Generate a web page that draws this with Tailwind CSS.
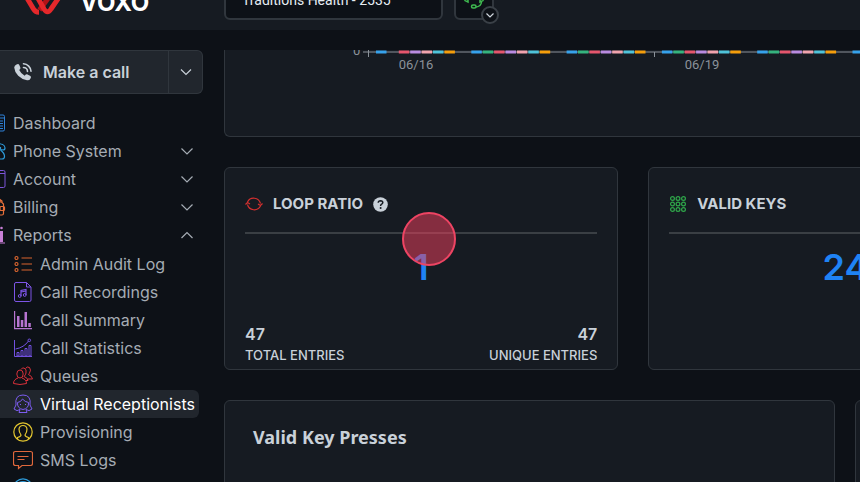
<!DOCTYPE html>
<html lang="en">

<head>
    <meta charset="UTF-8">
    <meta name="viewport" content="width=device-width, initial-scale=1.0">
    <script src="https://cdn.jsdelivr.net/npm/@tailwindcss/browser@4"></script>
    <title>VOXO | Virtual Receptionists</title>
</head>

<body class="h-screen overflow-hidden bg-[#0d1117] font-['Inter',sans-serif] text-[#c9d1d9]">
    <!-- Top bar -->
    <header class="flex h-[30px] items-end overflow-hidden bg-[#161b22]">
        <a href="#" class="flex w-[224px] shrink-0 items-end gap-4 pb-[15px] pl-6 text-white">
            <svg class="h-[30px] w-10" viewBox="0 0 40 30" fill="none" stroke-width="5">
                <path d="M15.500 25 L28 8" stroke="#b31217" />
                <path d="M0 8 L9.500 24 Q11.500 27.300 15 27.300" stroke="#e5282b" />
                <path d="M11 8 L20 24 Q23.500 29.500 27 24 L38 8" stroke="#e5282b" />
            </svg>
            <span class="text-2xl leading-6 font-bold">VOXO</span>
        </a>
        <select aria-label="Company"
            class="mb-[10px] h-10 w-[219px] shrink-0 appearance-none rounded-md border-2 border-[#30363d] bg-[#0d1117] px-4 font-['Roboto',sans-serif] text-sm text-[#e6edf3]">
            <option>Traditions Health - 2535</option>
        </select>
        <button aria-label="Agent status"
            class="relative mb-[10px] ml-[11px] flex h-10 w-10 shrink-0 items-center justify-center rounded-md border-2 border-[#30363d] bg-[#0d1117]">
            <svg class="h-5 w-5" viewBox="0 0 20 20" fill="none" stroke="#3fb950" stroke-width="1.500">
                <path d="M2 9a8 8 0 0 1 16 0" />
                <path d="M1 7v3.500l3 1.500V7zM19 7v3.500l-3 1.500V7z" />
                <path d="M17.500 12Q17 16.500 12 17" />
                <rect x="7.500" y="15" width="4.500" height="3" rx="1.500" />
            </svg>
            <span
                class="absolute -right-[7px] -bottom-[6px] flex h-[18px] w-[18px] items-center justify-center rounded-full border-2 border-[#3a4047] bg-[#0d1117]">
                <svg class="h-2 w-2" viewBox="0 0 8 8" fill="none" stroke="#d0d7de" stroke-width="1.200">
                    <path d="M0.500 2.500 L4 6 L7.500 2.500" />
                </svg>
            </span>
        </button>
    </header>

    <div class="flex pt-5">
        <!-- Sidebar -->
        <aside class="w-[224px] shrink-0">
            <div class="mr-[21px] flex h-11 rounded-r-md border border-l-0 border-[#30363d] bg-[#21262d]">
                <button class="flex flex-1 items-center gap-[10px] pl-[13px] text-base font-semibold">
                    <svg class="h-5 w-5" viewBox="0 0 20 20" fill="#c9d1d9">
                        <path
                            d="M3.500 2.500 Q5.500 1.300 6.300 3 L7.500 6 Q7.500 7 6.200 8 Q8 11.800 11.700 13.700 Q13 12 14 12.300 L17.500 14 Q18.500 15 17.500 16.500 Q16.500 18.600 14 18.300 Q9 17.500 5.200 13.800 Q1.500 9.800 1.200 5.500 Q1.400 3.500 3.500 2.500z" />
                        <path d="M10.500 1.800a8 8 0 0 1 7.500 7.500M10.500 5.500a4 4 0 0 1 4 4" fill="none"
                            stroke="#c9d1d9" stroke-width="1.600" stroke-linecap="round" />
                    </svg>
                    Make a call
                </button>
                <button aria-label="More call options"
                    class="flex w-[34px] items-center justify-center border-l border-[#30363d]">
                    <svg class="h-3 w-3" viewBox="0 0 12 12" fill="none" stroke="#c9d1d9" stroke-width="1.200">
                        <path d="M1 3.500 L6 8.500 L11 3.500" />
                    </svg>
                </button>
            </div>

            <nav class="mt-[15px] mr-[25px] text-base text-[#a5acb4]">
                <ul class="-ml-3">
                    <li>
                        <a href="#" class="flex h-7 items-center gap-[7px]">
                            <svg class="h-[18px] w-[18px]" viewBox="0 0 18 18" fill="none" stroke="#2f81d7">
                                <rect x="1" y="1" width="15.500" height="16" rx="1.500" />
                                <path d="M1 4h15.500M10 7h5M10 9.500h5M10 12h5M10 14.500h5" />
                            </svg>
                            Dashboard
                        </a>
                    </li>
                    <li>
                        <a href="#" class="flex h-7 items-center gap-[7px]">
                            <svg class="h-[18px] w-[18px]" viewBox="0 0 18 18" fill="none" stroke="#2d9cdb"
                                stroke-width="1.200">
                                <path d="M1 6C1 0 17 0 17 6Q17 8 15 8L13 7.500Q12 7 12.500 5.500Q9 4 5.500 5.500Q6 8 3 8Q1 8 1 6z" />
                                <path d="M12.500 8Q16.500 11 16.500 14.500Q16.500 17 14 17H4" />
                            </svg>
                            <span class="flex-1">Phone System</span>
                            <svg class="mr-[6px] h-3 w-3" viewBox="0 0 12 12" fill="none" stroke="#a5acb4"
                                stroke-width="1.200">
                                <path d="M0.500 3.500 L6 9 L11.500 3.500" />
                            </svg>
                        </a>
                    </li>
                    <li>
                        <a href="#" class="flex h-7 items-center gap-[7px]">
                            <svg class="h-[18px] w-[18px]" viewBox="0 0 18 18" fill="none" stroke="#7d55d9">
                                <rect x="1" y="0.500" width="16" height="17" rx="1.500" />
                                <path d="M1 3.500h16" />
                            </svg>
                            <span class="flex-1">Account</span>
                            <svg class="mr-[6px] h-3 w-3" viewBox="0 0 12 12" fill="none" stroke="#a5acb4"
                                stroke-width="1.200">
                                <path d="M0.500 3.500 L6 9 L11.500 3.500" />
                            </svg>
                        </a>
                    </li>
                    <li>
                        <a href="#" class="flex h-7 items-center gap-[7px]">
                            <svg class="h-[18px] w-[18px]" viewBox="0 0 18 18" fill="none" stroke="#e8703a"
                                stroke-width="1.200">
                                <path d="M1 4h12.500l2 2v9.500q0 1.500-1.500 1.500H1zM12 4V1.500L14 3v2" />
                                <rect x="12" y="8.500" width="4.500" height="4" rx="1" />
                            </svg>
                            <span class="flex-1">Billing</span>
                            <svg class="mr-[6px] h-3 w-3" viewBox="0 0 12 12" fill="none" stroke="#a5acb4"
                                stroke-width="1.200">
                                <path d="M0.500 3.500 L6 9 L11.500 3.500" />
                            </svg>
                        </a>
                    </li>
                    <li>
                        <a href="#" class="flex h-7 items-center gap-[7px]">
                            <svg class="h-[18px] w-[18px]" viewBox="0 0 18 18" fill="#c77fd6">
                                <path d="M12 5h3v11h-3zM7 8h3v8H7zM0 16.500h17v1H0z" />
                                <circle cx="13.500" cy="2" r="1.300" />
                            </svg>
                            <span class="flex-1">Reports</span>
                            <svg class="mr-[6px] h-3 w-3" viewBox="0 0 12 12" fill="none" stroke="#a5acb4"
                                stroke-width="1.200">
                                <path d="M0.500 9 L6 3.500 L11.500 9" />
                            </svg>
                        </a>
                    </li>
                </ul>

                <!-- Reports submenu -->
                <ul class="pt-px">
                    <li>
                        <a href="#" class="flex h-7 items-center gap-[7px] pl-[13px]">
                            <svg class="h-5 w-5" viewBox="0 0 20 20" fill="none" stroke="#d9652f" stroke-width="1.200">
                                <circle cx="3.500" cy="4" r="1.500" />
                                <circle cx="3.500" cy="10" r="1.500" />
                                <circle cx="3.500" cy="16" r="1.500" />
                                <path d="M8.500 4H19M8.500 10H19M8.500 16H19" />
                            </svg>
                            Admin Audit Log
                        </a>
                    </li>
                    <li>
                        <a href="#" class="flex h-7 items-center gap-[7px] pl-[13px]">
                            <svg class="h-5 w-5" viewBox="0 0 20 20" fill="none" stroke="#7d55e6">
                                <path
                                    d="M3 0.500h10.500L18 5v13q0 1.500-1.500 1.500H3Q1.500 19.500 1.500 18V2Q1.500 0.500 3 0.500zM13.500 0.500V5H18" />
                                <path d="M8 14V8.500L13 7.500V13M8 10l5-1" stroke-width="1.200" />
                                <circle cx="6.700" cy="14" r="1.400" />
                                <circle cx="11.700" cy="13" r="1.400" />
                            </svg>
                            Call Recordings
                        </a>
                    </li>
                    <li>
                        <a href="#" class="flex h-7 items-center gap-[7px] pl-[13px]">
                            <svg class="h-5 w-5" viewBox="0 0 20 20" fill="#b674d0">
                                <path d="M1 1h1.200v17H19v1.200H1zM4 6h2.500v11H4zM7.800 10h2.500v7H7.800zM11.500 2H14v15h-2.500zM15.300 13h2.500v4h-2.500z" />
                            </svg>
                            Call Summary
                        </a>
                    </li>
                    <li>
                        <a href="#" class="flex h-7 items-center gap-[7px] pl-[13px]">
                            <svg class="h-5 w-5" viewBox="0 0 20 20" fill="none" stroke="#7250e0">
                                <path d="M1.500 2v16.500H19M2.500 11Q11 9.500 15.500 3" />
                                <circle cx="16.300" cy="2.300" r="1.300" />
                                <path d="M4 14.500h2V18H4zM8 12.500h2V18H8zM12 10.500h2V18h-2zM16 7.500h2V18h-2z" />
                            </svg>
                            Call Statistics
                        </a>
                    </li>
                    <li>
                        <a href="#" class="flex h-7 items-center gap-[7px] pl-[13px]">
                            <svg class="h-5 w-5" viewBox="0 0 20 20" fill="none" stroke="#d8303a">
                                <ellipse cx="7" cy="8" rx="3.200" ry="4" />
                                <path d="M5 12Q0.500 13.500 0.500 17.500Q7 19.500 13.500 17.500Q13.500 13.500 9 12" />
                                <path d="M8 3.500Q9 1.500 11 2Q14 3 13 7Q12.500 9 11 10.500Q14.500 11.500 15 14.500H13" />
                                <path d="M12.500 2.500Q14 0 16.500 1.500Q18.500 4 16.500 7Q16 8 15.500 8.500Q19 10 19.500 13H15" />
                            </svg>
                            Queues
                        </a>
                    </li>
                    <li>
                        <a href="#"
                            class="flex h-7 items-center gap-[7px] rounded-r-md bg-[#21262d] pl-[13px] whitespace-nowrap text-white">
                            <svg class="h-5 w-5 shrink-0" viewBox="0 0 20 20" fill="none" stroke="#7c5cf0">
                                <path d="M3 11Q1.500 1 10 1Q18.500 1 17 11L19 15Q16 18 13 15.500M3 11L1 15Q4 18 7 15.500" />
                                <path d="M4.500 8.500Q8 8 9.500 5Q12 8 15.500 8.500Q16 14.500 10 15.500Q4 14.500 4.500 8.500z" />
                                <path d="M7.500 10v1M12.500 10v1M7 15.500L6 18.500H14L13 15.500" />
                            </svg>
                            Virtual Receptionists
                        </a>
                    </li>
                    <li>
                        <a href="#" class="flex h-7 items-center gap-[7px] pl-[13px]">
                            <svg class="h-5 w-5" viewBox="0 0 20 20" fill="none" stroke="#e3c62f" stroke-width="1.200">
                                <circle cx="10" cy="10" r="9.200" />
                                <path
                                    d="M4.500 17V15.500Q8 14.500 8 13Q6 10.500 6 7Q6.500 3.500 10 3.500Q13.500 3.500 14 7Q14 10.500 12 13Q12 14.500 15.500 15.500V17" />
                            </svg>
                            Provisioning
                        </a>
                    </li>
                    <li>
                        <a href="#" class="flex h-7 items-center gap-[7px] pl-[13px]">
                            <svg class="h-5 w-5" viewBox="0 0 20 20" fill="none" stroke="#e0683c" stroke-width="1.200">
                                <path
                                    d="M2.500 1.500h15q2 0 2 2v10q0 2-2 2H9L5.500 18.500V15.500H2.500q-2 0-2-2v-10q0-2 2-2zM4.500 6.500h11M4.500 9.500h7" />
                            </svg>
                            SMS Logs
                        </a>
                    </li>
                    <li>
                        <a href="#" aria-label="More reports" class="flex h-7 items-center pl-[13px]">
                            <svg class="h-5 w-5" viewBox="0 0 20 20" fill="none" stroke="#2d9cdb" stroke-width="1.200">
                                <circle cx="10" cy="10" r="9.200" />
                                <path d="M4 6Q10 1 16 6" />
                            </svg>
                        </a>
                    </li>
                </ul>
            </nav>
        </aside>

        <!-- Content -->
        <main class="min-w-0 flex-1 overflow-hidden">
            <section class="h-[87px] overflow-hidden rounded-bl-md border-b border-l border-[#30363d] bg-[#161b22]">
                <svg id="chart" class="h-10 w-[760px] max-w-none font-['Roboto',sans-serif] text-[13px]"
                    viewBox="0 0 760 40" fill="#8b929a">
                    <path d="M138 2H760M143.500 0V7M429.500 2V7" stroke="#8b929a" />
                    <text x="128" y="5">0</text>
                    <text x="191" y="19" text-anchor="middle">06/16</text>
                    <text x="477" y="19" text-anchor="middle">06/19</text>
                </svg>
            </section>

            <div class="mt-[30px] grid auto-cols-[62%] grid-flow-col gap-[30px]">
                <section class="relative rounded-md border border-[#30363d] bg-[#161b22] px-5 pb-1">
                    <h2
                        class="flex items-center gap-[10px] border-b-2 border-[#3a3f44] pt-6 pb-4 text-[15px] leading-6 font-bold">
                        <svg class="h-[18px] w-[18px]" viewBox="0 0 18 18" fill="none" stroke="#d3302f"
                            stroke-width="1.200">
                            <path d="M2.500 7A7 7 0 0 1 15.500 8.500M15.500 11A7 7 0 0 1 2.500 9.500" />
                            <path d="M0.500 9.500L2.500 7.500L5 9M13 9L15.500 10.500L17.500 8.500" />
                        </svg>
                        LOOP RATIO
                        <svg class="h-[15px] w-[15px]" viewBox="0 0 15 15">
                            <circle cx="7.500" cy="7.500" r="7.300" fill="#c9d1d9" />
                            <path d="M5.200 5.700Q5.400 3.700 7.500 3.700Q9.800 3.800 9.800 5.700Q9.700 6.700 8.300 7.400Q7.600 7.900 7.600 8.900"
                                fill="none" stroke="#161b22" stroke-width="1.500" />
                            <circle cx="7.600" cy="11" r="1" fill="#161b22" />
                        </svg>
                    </h2>
                    <p class="mt-[13px] text-center text-4xl font-semibold text-[#1f83f5]">1</p>
                    <dl class="mt-[37px] flex justify-between">
                        <div class="flex flex-col-reverse gap-px">
                            <dt class="text-[13px] leading-5 font-medium">TOTAL ENTRIES</dt>
                            <dd class="text-base leading-5 font-semibold">47</dd>
                        </div>
                        <div class="flex flex-col-reverse gap-px text-right">
                            <dt class="text-[13px] leading-5 font-medium">UNIQUE ENTRIES</dt>
                            <dd class="text-base leading-5 font-semibold">47</dd>
                        </div>
                    </dl>
                    <!-- click marker -->
                    <span
                        class="absolute top-[44px] left-[177px] h-[54px] w-[54px] rounded-full border-2 border-[#ee4463] bg-[#f43f5e]/50"></span>
                </section>

                <section class="rounded-md border border-[#30363d] bg-[#161b22] px-5 pb-1">
                    <h2
                        class="flex items-center gap-[10px] border-b-2 border-[#3a3f44] pt-6 pb-4 text-[15px] leading-6 font-bold">
                        <svg class="h-[18px] w-[18px]" viewBox="0 0 18 18" fill="none" stroke="#2fa84a"
                            stroke-width="1.200">
                            <circle cx="3.500" cy="3.500" r="1.900" />
                            <circle cx="9" cy="3.500" r="1.900" />
                            <circle cx="14.500" cy="3.500" r="1.900" />
                            <circle cx="3.500" cy="9" r="1.900" />
                            <circle cx="9" cy="9" r="1.900" />
                            <circle cx="14.500" cy="9" r="1.900" />
                            <circle cx="3.500" cy="14.500" r="1.900" />
                            <circle cx="9" cy="14.500" r="1.900" />
                            <circle cx="14.500" cy="14.500" r="1.900" />
                        </svg>
                        VALID KEYS
                    </h2>
                    <p class="mt-[13px] text-center text-4xl font-semibold text-[#1f83f5]">24</p>
                </section>
            </div>

            <div class="mt-[30px] grid auto-cols-[96%] grid-flow-col gap-5">
                <section class="min-h-20 rounded-md border border-[#30363d] bg-[#161b22] px-7 pt-[22px] pb-10">
                    <h2 class="font-['Noto_Sans',sans-serif] text-lg font-bold">Valid Key Presses</h2>
                </section>
                <section class="rounded-md border border-[#30363d] bg-[#161b22]"></section>
            </div>
        </main>
    </div>

    <script>
        // one group of bars per day, seven keys in each
        const colors = ['#36a2eb', '#35b37e', '#e5566d', '#b98be0', '#f0a3ad', '#4fc3d9', '#f59e0b'];
        const chart = document.getElementById('chart');

        for (let day = 0; day < 6; day++) {
            colors.forEach((color, i) => {
                if (day === 0 && i === 1) return;
                const bar = document.createElementNS('http://www.w3.org/2000/svg', 'rect');
                bar.setAttribute('x', 151 + day * 95.3 + i * 11.4);
                bar.setAttribute('y', 0.5);
                bar.setAttribute('width', 10.5);
                bar.setAttribute('height', 3);
                bar.setAttribute('fill', color);
                chart.appendChild(bar);
            });
        }
    </script>
</body>

</html>
